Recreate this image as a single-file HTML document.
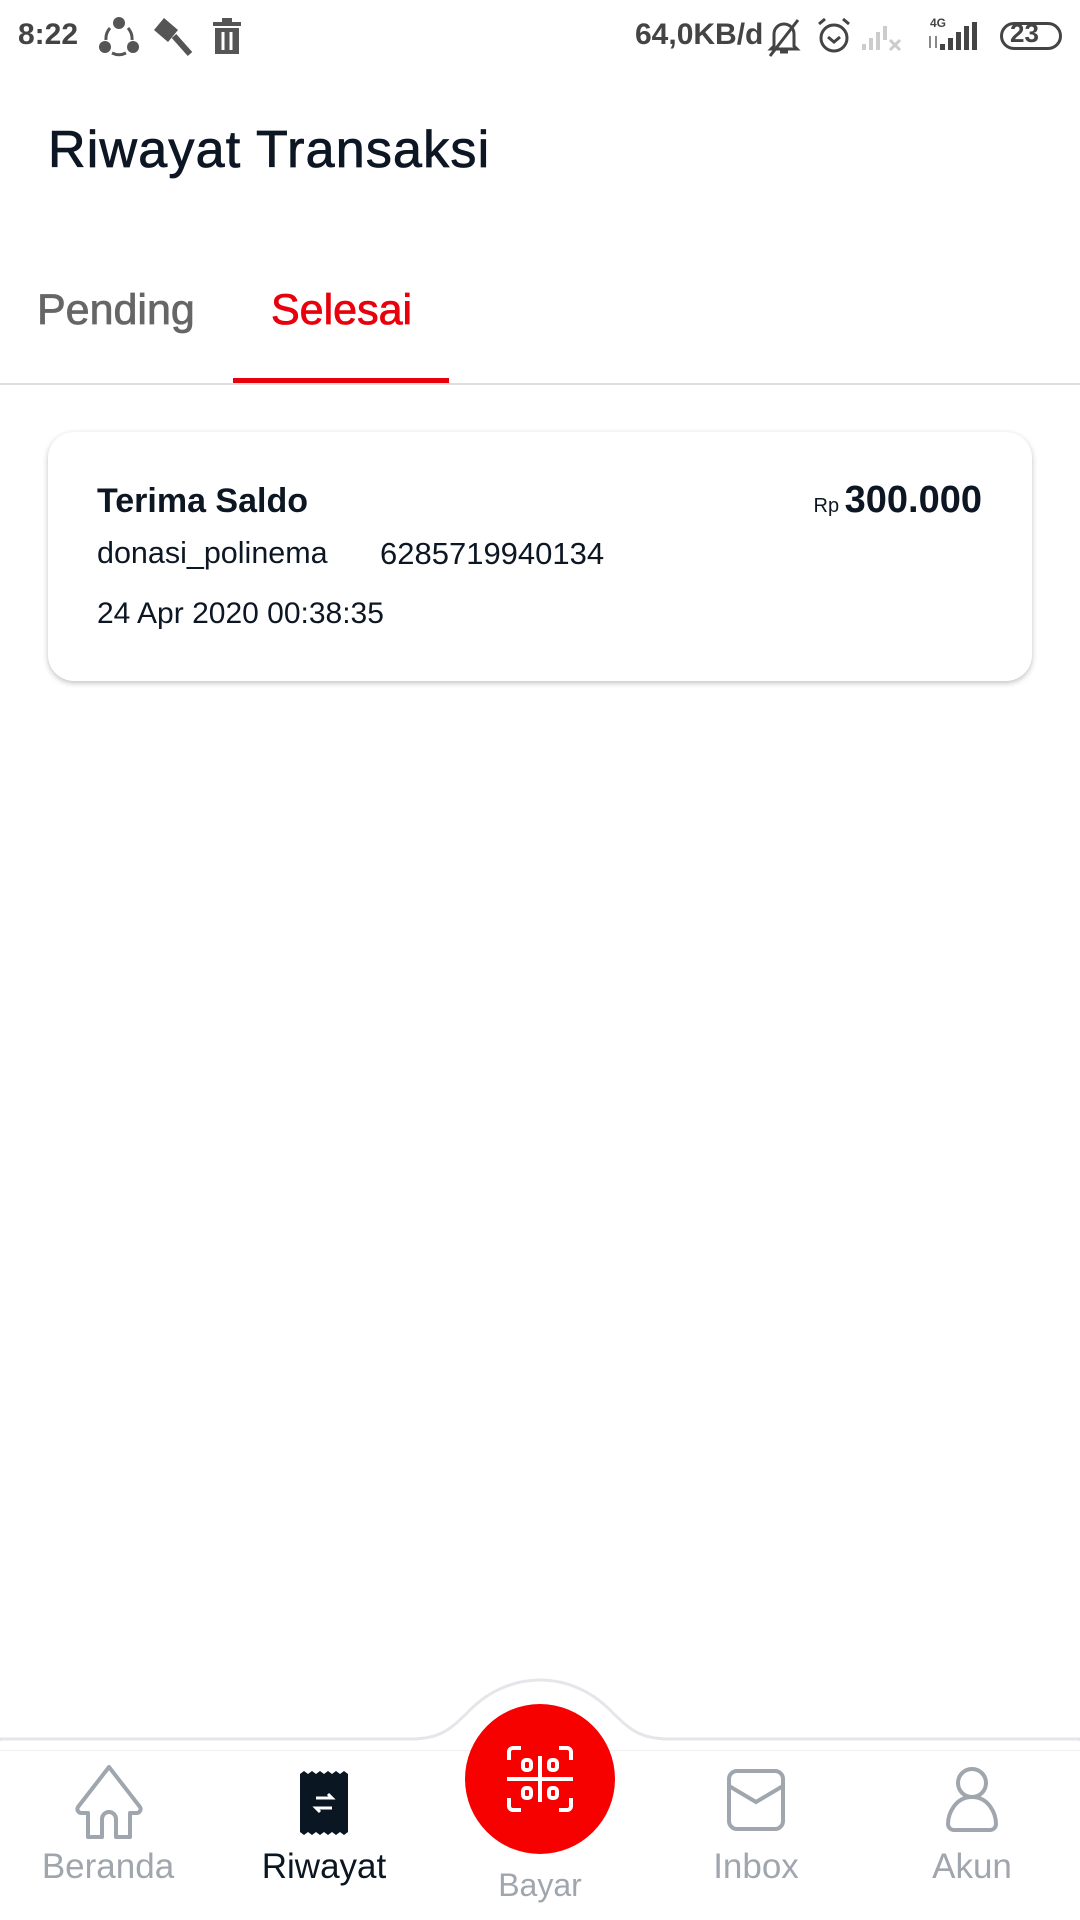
<!DOCTYPE html>
<html><head><meta charset="utf-8"><style>
*{margin:0;padding:0;box-sizing:border-box}
body{width:1080px;height:1920px;background:#fff;font-family:"Liberation Sans",sans-serif;position:relative;overflow:hidden}
.a{position:absolute;white-space:nowrap}
</style></head><body>
<!-- status bar -->
<div class="a" style="left:18px;top:18px;font-size:30px;font-weight:bold;color:#444">8:22</div>
<svg class="a" style="left:98px;top:16px" width="42" height="42" viewBox="0 0 42 42"><g fill="#555"><circle cx="21" cy="7" r="6"/><circle cx="7" cy="31" r="6"/><circle cx="35" cy="31" r="6"/></g><path d="M12 12 A16 16 0 0 0 8 24 M30 12 A16 16 0 0 1 34 24 M14 37 A16 16 0 0 0 28 37" stroke="#555" stroke-width="3" fill="none"/></svg>
<svg class="a" style="left:152px;top:16px" width="42" height="42" viewBox="0 0 42 42"><path d="M12 2 L26 14 L16 26 L2 14Z" fill="#555"/><path d="M22 20 L38 38" stroke="#555" stroke-width="6"/></svg>
<svg class="a" style="left:211px;top:18px" width="32" height="38" viewBox="0 0 32 38"><rect x="2" y="4" width="28" height="4" fill="#555"/><rect x="11" y="0" width="10" height="5" fill="#555"/><path d="M4 10h24v26H4z" fill="#555"/><path d="M12 14v18M20 14v18" stroke="#fff" stroke-width="3"/></svg>
<div class="a" style="left:635px;top:18px;font-size:30px;font-weight:bold;color:#444">64,0KB/d</div>
<svg class="a" style="left:766px;top:16px" width="36" height="42" viewBox="0 0 36 42"><path d="M8 30V18a10 10 0 0 1 20 0v12l3 3H5z M14 36h8" stroke="#444" stroke-width="3" fill="none"/><path d="M4 40L32 4" stroke="#444" stroke-width="3"/></svg>
<svg class="a" style="left:816px;top:16px" width="36" height="40" viewBox="0 0 36 40"><circle cx="18" cy="22" r="13" stroke="#444" stroke-width="3" fill="none"/><path d="M12 21l6 5 6-5M3 8l6-5M33 8l-6-5" stroke="#444" stroke-width="3" fill="none"/></svg>
<svg class="a" style="left:862px;top:22px" width="44" height="30" viewBox="0 0 44 30"><g fill="#ccc"><rect x="0" y="22" width="4" height="6"/><rect x="7" y="16" width="4" height="12"/><rect x="14" y="10" width="4" height="18"/><rect x="21" y="4" width="4" height="14"/></g><path d="M28 18l10 10M38 18l-10 10" stroke="#ccc" stroke-width="3"/></svg>
<div class="a" style="left:930px;top:16px;font-size:12px;font-weight:bold;color:#444">4G</div>
<svg class="a" style="left:926px;top:22px" width="56" height="30" viewBox="0 0 56 30"><g fill="#444"><rect x="14" y="22" width="5" height="6"/><rect x="22" y="16" width="5" height="12"/><rect x="30" y="10" width="5" height="18"/><rect x="38" y="4" width="5" height="24"/><rect x="46" y="0" width="5" height="28"/></g><path d="M4 14v12M10 14v12" stroke="#888" stroke-width="2"/></svg>
<div class="a" style="left:1000px;top:22px;width:62px;height:28px;border:3px solid #444;border-radius:14px"></div>
<div class="a" style="left:1010px;top:18px;font-size:26px;font-weight:bold;color:#444">23</div>

<div class="a" style="left:48px;top:120px;font-size:52px;color:#0d1724;letter-spacing:1.2px;-webkit-text-stroke:0.8px #0d1724">Riwayat Transaksi</div>
<div class="a" style="left:37px;top:286px;font-size:43px;color:#666;-webkit-text-stroke:0.8px #666">Pending</div>
<div class="a" style="left:271px;top:286px;font-size:43px;color:#e8000c;-webkit-text-stroke:0.8px #e8000c">Selesai</div>
<div class="a" style="left:233px;top:378px;width:216px;height:5px;background:#e8000c"></div>
<div class="a" style="left:0;top:383px;width:1080px;height:2px;background:#ddd"></div>

<div class="a" style="left:48px;top:432px;width:984px;height:249px;border-radius:26px;background:#fff;box-shadow:0 2px 6px rgba(0,0,0,0.25)"></div>
<div class="a" style="left:97px;top:482px;font-size:34px;font-weight:bold;color:#0d1724">Terima Saldo</div>
<div class="a" style="left:97px;top:536px;font-size:30.5px;color:#0d1724">donasi_polinema</div>
<div class="a" style="left:380px;top:536px;font-size:31px;color:#0d1724">6285719940134</div>
<div class="a" style="left:97px;top:597px;font-size:30px;color:#0d1724">24 Apr 2020 00:38:35</div>
<div class="a" style="right:98px;top:479px;font-size:38px;font-weight:bold;color:#0d1724"><span style="font-size:20px;font-weight:normal">Rp </span>300.000</div>

<!-- bottom nav -->
<svg class="a" style="left:0;top:1670px" width="1080" height="80" viewBox="0 0 1080 80"><path d="M0 69 H410 C440 69 450 60 470 40 C510 0 570 0 610 40 C630 60 640 69 670 69 H1080 V80 H0Z" fill="#fff" stroke="#e4e6ea" stroke-width="3"/><rect x="0" y="71" width="1080" height="10" fill="#fff"/></svg>
<div class="a" style="left:0;top:1750px;width:1080px;height:1px;background:#f0f0f0"></div>
<div class="a" style="left:465px;top:1704px;width:150px;height:150px;border-radius:50%;background:#f70000"></div>
<svg class="a" style="left:505px;top:1744px" width="70" height="70" viewBox="0 0 70 70" fill="none" stroke="#fff" stroke-width="4"><path d="M4 16V8a4 4 0 0 1 4-4h8M54 4h8a4 4 0 0 1 4 4v8M66 54v8a4 4 0 0 1-4 4h-8M16 66H8a4 4 0 0 1-4-4v-8M2 35h66M35 12v46"/><rect x="18" y="16" width="8" height="10" rx="3"/><rect x="44" y="16" width="8" height="10" rx="3"/><rect x="18" y="44" width="8" height="10" rx="3"/><rect x="44" y="44" width="8" height="10" rx="3"/></svg>
<svg class="a" style="left:72px;top:1763px" width="74" height="80" viewBox="0 0 74 80" fill="none" stroke="#a0a6ae" stroke-width="4"><path d="M37 4 L6 44 a4 4 0 0 0 4 6 h6 v24 h14 v-18 a3 3 0 0 1 14 0 v18 h14 v-24 h6 a4 4 0 0 0 4-6Z" stroke-linejoin="round"/></svg>
<svg class="a" style="left:298px;top:1770px" width="52" height="66" viewBox="0 0 52 66"><path d="M2 4 l4 -3 4 3 4 -3 4 3 4 -3 4 3 4 -3 4 3 4 -3 4 3 4 -3 4 3 V62 l-4 3 -4 -3 -4 3 -4 -3 -4 3 -4 -3 -4 3 -4 -3 -4 3 -4 -3 -4 3 -4 -3Z" fill="#0a1722"/><path d="M18 28h16l-4-4M34 38H18l4 4" stroke="#fff" stroke-width="3" fill="none"/></svg>
<svg class="a" style="left:726px;top:1768px" width="60" height="64" viewBox="0 0 60 64" fill="none" stroke="#a0a6ae" stroke-width="4"><rect x="3" y="3" width="54" height="58" rx="8"/><path d="M3 18 L30 34 L57 18"/></svg>
<svg class="a" style="left:945px;top:1766px" width="54" height="68" viewBox="0 0 54 68" fill="none" stroke="#a0a6ae" stroke-width="4"><circle cx="27" cy="17" r="14"/><path d="M27 31 C10 31 3 48 3 58 a6 6 0 0 0 6 6 h36 a6 6 0 0 0 6-6 C51 48 44 31 27 31Z"/></svg>
<div class="a" style="left:0;width:216px;top:1847px;text-align:center;font-size:35px;color:#a0a6ae">Beranda</div>
<div class="a" style="left:216px;width:216px;top:1847px;text-align:center;font-size:35px;color:#0a1722">Riwayat</div>
<div class="a" style="left:432px;width:216px;top:1867px;text-align:center;font-size:32px;color:#a0a6ae">Bayar</div>
<div class="a" style="left:648px;width:216px;top:1847px;text-align:center;font-size:35px;color:#a0a6ae">Inbox</div>
<div class="a" style="left:864px;width:216px;top:1847px;text-align:center;font-size:35px;color:#a0a6ae">Akun</div>
</body></html>
